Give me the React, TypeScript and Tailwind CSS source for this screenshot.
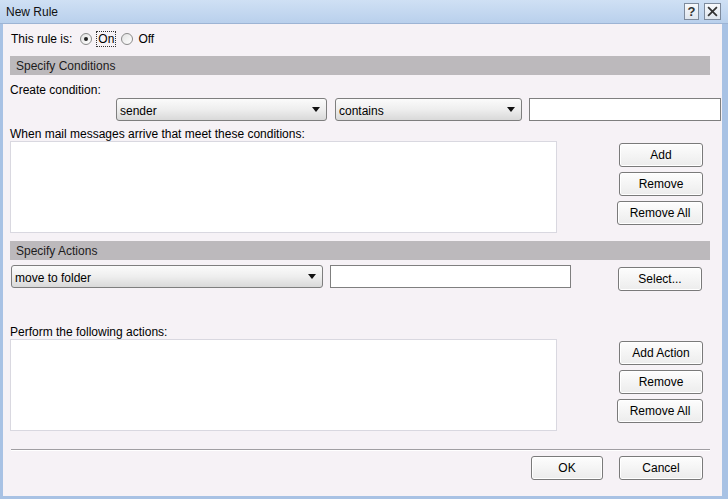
import React from "react";

function Arrow() {
  return (
    <svg width="8" height="5" viewBox="0 0 8 5" className="shrink-0">
      <path d="M0 0 H8 L4 5 Z" fill="#111" />
    </svg>
  );
}

function Dropdown({ label, className }: { label: string; className: string }) {
  return (
    <div
      className={`flex items-center justify-between rounded-[3px] border border-[#7e7e7e] bg-gradient-to-b from-[#fbfbfb] via-[#eeeeee] to-[#d9d9d9] pl-[3px] pr-[6px] ${className}`}
    >
      <span className="pt-[2px] leading-none">{label}</span>
      <Arrow />
    </div>
  );
}

function Btn({ label, className }: { label: string; className: string }) {
  return (
    <div
      className={`flex h-[24px] items-center justify-center rounded-[3px] border border-[#7a7a7a] bg-gradient-to-b from-[#fdfdfd] to-[#ececec] shadow-[inset_0_0_0_1px_#ffffff] ${className}`}
    >
      {label}
    </div>
  );
}

function SectionBar({ label }: { label: string }) {
  return (
    <div className="flex h-[19px] w-[700px] items-center bg-[#bcb9bc] pl-[6px] text-[#1c1c1c]">
      {label}
    </div>
  );
}

function Radio({ checked }: { checked: boolean }) {
  return (
    <div className="flex h-[12px] w-[12px] items-center justify-center rounded-full border border-[#8a8a8a] bg-gradient-to-br from-[#e2e2e2] to-white">
      {checked && <div className="h-[4px] w-[4px] rounded-full bg-[#222]" />}
    </div>
  );
}

export default function App() {
  return (
    <div
      className="flex h-[499px] w-[728px] flex-col bg-[#a8c2e4] text-[12px] text-black"
      style={{ fontFamily: '"Liberation Sans", Arial, sans-serif' }}
    >
      {/* Title bar */}
      <div className="flex h-[24px] items-center justify-between border-b border-[#9db4d4] bg-gradient-to-b from-[#cfe0f4] to-[#b9d0ec] pl-[6px] pr-[7px]">
        <span className="text-[12px] text-[#111]">New Rule</span>
        <div className="flex items-center gap-[5px]">
          <div className="flex h-[17px] w-[15px] items-center justify-center border border-[#7d8a9c] bg-gradient-to-b from-[#f7f9fc] to-[#dfe6ef] text-[13px] font-bold leading-none text-[#333]">
            ?
          </div>
          <div className="flex h-[17px] w-[17px] items-center justify-center border border-[#7d8a9c] bg-gradient-to-b from-[#f7f9fc] to-[#dfe6ef]">
            <svg width="11" height="11" viewBox="0 0 10 10">
              <path d="M1 1 L9 9 M9 1 L1 9" stroke="#333" strokeWidth="1.6" />
            </svg>
          </div>
        </div>
      </div>

      {/* Body */}
      <div className="ml-[3px] mr-[6px] mb-[3px] flex flex-1 flex-col bg-[#f6f2f6] pl-[7px]">
        {/* radio row */}
        <div className="mt-[7px] flex h-[16px] items-center">
          <span className="ml-[1px]">This rule is:</span>
          <div className="ml-[8px]">
            <Radio checked />
          </div>
          <span className="ml-[4px] border border-dotted border-[#333] px-[1px] leading-[14px]">On</span>
          <div className="ml-[5px]">
            <Radio checked={false} />
          </div>
          <span className="ml-[5px]">Off</span>
        </div>

        <div className="mt-[9px]">
          <SectionBar label="Specify Conditions" />
        </div>

        <div className="mt-[8px] h-[14px] leading-[14px]">Create condition:</div>

        <div className="mt-[1px] flex h-[23px] items-center">
          <Dropdown label="sender" className="ml-[106px] h-[23px] w-[211px]" />
          <Dropdown label="contains" className="ml-[8px] h-[23px] w-[187px]" />
          <div className="ml-[7px] h-[23px] w-[192px] border border-[#7f7f7f] bg-white" />
        </div>

        <div className="mt-[6px] h-[14px] leading-[14px]">
          When mail messages arrive that meet these conditions:
        </div>

        <div className="flex h-[92px]">
          <div className="h-[92px] w-[547px] border border-[#d9d8e0] bg-white" />
          <div className="ml-[60px] flex w-[86px] flex-col items-end gap-[5px] pt-[2px]">
            <Btn label="Add" className="w-[84px]" />
            <Btn label="Remove" className="w-[84px]" />
            <Btn label="Remove All" className="w-[86px]" />
          </div>
        </div>

        <div className="mt-[8px]">
          <SectionBar label="Specify Actions" />
        </div>

        <div className="mt-[5px] flex h-[26px] items-start">
          <Dropdown label="move to folder" className="ml-[1px] h-[23px] w-[312px]" />
          <div className="ml-[7px] h-[23px] w-[241px] border border-[#7f7f7f] bg-white" />
          <Btn label="Select..." className="ml-[47px] mt-[2px] w-[84px]" />
        </div>

        <div className="mt-[34px] h-[14px] leading-[14px]">Perform the following actions:</div>

        <div className="flex h-[92px]">
          <div className="h-[92px] w-[547px] border border-[#d9d8e0] bg-white" />
          <div className="ml-[60px] flex w-[86px] flex-col items-end gap-[5px] pt-[2px]">
            <Btn label="Add Action" className="w-[84px]" />
            <Btn label="Remove" className="w-[84px]" />
            <Btn label="Remove All" className="w-[86px]" />
          </div>
        </div>

        <div className="ml-[1px] mt-[18px] h-[2px] w-[699px] border-t border-b border-t-[#a09ea2] border-b-white" />

        <div className="mt-[5px] flex h-[24px] justify-end pr-[19px]">
          <Btn label="OK" className="w-[72px]" />
          <Btn label="Cancel" className="ml-[16px] w-[84px]" />
        </div>
      </div>
    </div>
  );
}
